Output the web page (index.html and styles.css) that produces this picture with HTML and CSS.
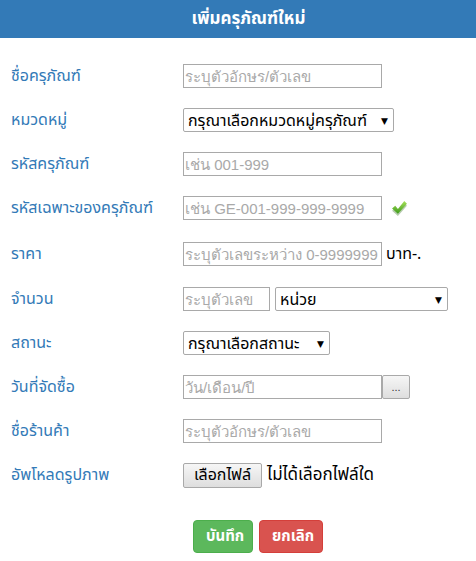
FILE: index.html
```html
<!DOCTYPE html>
<html lang="th">
  <head>
    <meta charset="UTF-8" />
    <meta name="viewport" content="width=device-width, initial-scale=1.0" />
    <title>เพิ่มครุภัณฑ์ใหม่</title>
    <link rel="stylesheet" href="styles.css">
  </head>
  <body>
    <div class="panel">
      <div class="panel-head">เพิ่มครุภัณฑ์ใหม่</div>
      <form class="asset-form">
        <div class="row">
          <label for="name">ชื่อครุภัณฑ์</label>
          <input type="text" id="name" class="field" placeholder="ระบุตัวอักษร/ตัวเลข" />
        </div>
        <div class="row">
          <label for="category">หมวดหมู่</label>
          <span class="select-box cat">
            <select id="category"><option>กรุณาเลือกหมวดหมู่ครุภัณฑ์</option></select>
          </span>
        </div>
        <div class="row">
          <label for="code">รหัสครุภัณฑ์</label>
          <input type="text" id="code" class="field" placeholder="เช่น 001-999" />
        </div>
        <div class="row row-tall">
          <label for="serial">รหัสเฉพาะของครุภัณฑ์</label>
          <input type="text" id="serial" class="field" placeholder="เช่น GE-001-999-999-9999" />
          <svg class="check" width="17" height="17" viewBox="0 0 16 16">
            <defs>
              <linearGradient id="g" x1="0" y1="0" x2="0" y2="1">
                <stop offset="0" stop-color="#a6e05a" />
                <stop offset="1" stop-color="#3d9a1a" />
              </linearGradient>
            </defs>
            <path d="M1 9 L4 6.5 L6.5 9.5 L12.5 2 L15 4.5 L6.5 14 Z" fill="#2f6b14" opacity="0.35" transform="translate(0,1)" />
            <path d="M1 8 L4 5.5 L6.5 8.5 L12.5 1 L15 3.5 L6.5 13 Z" fill="url(#g)" />
          </svg>
        </div>
        <div class="row row-mid">
          <label for="price">ราคา</label>
          <input type="text" id="price" class="field" placeholder="ระบุตัวเลขระหว่าง 0-9999999" />
          <span class="unit">บาท-.</span>
        </div>
        <div class="row">
          <label for="qty">จำนวน</label>
          <input type="text" id="qty" class="field qty" placeholder="ระบุตัวเลข" />
          <span class="select-box unit-sel">
            <select><option>หน่วย</option></select>
          </span>
        </div>
        <div class="row">
          <label for="status">สถานะ</label>
          <span class="select-box status">
            <select id="status"><option>กรุณาเลือกสถานะ</option></select>
          </span>
        </div>
        <div class="row">
          <label for="date">วันที่จัดซื้อ</label>
          <input type="text" id="date" class="field" placeholder="วัน/เดือน/ปี" />
          <button type="button" class="dots">...</button>
        </div>
        <div class="row">
          <label for="shop">ชื่อร้านค้า</label>
          <input type="text" id="shop" class="field" placeholder="ระบุตัวอักษร/ตัวเลข" />
        </div>
        <div class="row">
          <label for="photo">อัพโหลดรูปภาพ</label>
          <span class="file-btn">เลือกไฟล์</span>
          <span class="file-text">ไม่ได้เลือกไฟล์ใด</span>
        </div>
        <div class="actions">
          <button type="submit" class="btn btn-save">บันทึก</button>
          <button type="reset" class="btn btn-cancel">ยกเลิก</button>
        </div>
      </form>
    </div>
  </body>
</html>
```

FILE: styles.css
```css
body {
  margin: 0;
  background: #fff;
  font-family: Tahoma, "Noto Sans Thai", "Noto Sans", "DejaVu Sans", sans-serif;
}

.panel-head {
  background: #337ab7;
  color: #fff;
  height: 38px;
  line-height: 38px;
  text-align: center;
  font-size: 17px;
  font-weight: bold;
  padding-left: 21px;
}

.asset-form {
  padding: 26px 0 0 11px;
}

.row {
  display: flex;
  align-items: center;
  height: 24px;
  margin-bottom: 20px;
}

.row-tall {
  margin-bottom: 22px;
}

.row-mid {
  margin-bottom: 21px;
}

.row label {
  width: 172px;
  color: #337ab7;
  font-size: 16px;
}

.field {
  box-sizing: border-box;
  width: 199px;
  height: 24px;
  border: 1px solid #a9a9a9;
  padding: 0 1px;
  margin: 0;
  font-family: "Liberation Sans", Tahoma, sans-serif;
  font-size: 15px;
  color: #333;
}

.field::placeholder {
  color: #a9a9a9;
}

.field.qty {
  width: 87px;
}

.check {
  margin-left: 9px;
}

.unit {
  margin-left: 4px;
  font-size: 16px;
  color: #000;
}

.select-box {
  position: relative;
  display: inline-block;
  height: 24px;
}

.select-box select {
  appearance: none;
  box-sizing: border-box;
  width: 100%;
  height: 24px;
  border: 1px solid #a9a9a9;
  border-radius: 2px;
  background: #fff;
  padding: 0 18px 0 4px;
  font-family: inherit;
  font-size: 16px;
  color: #000;
}

.select-box::after {
  content: "\25BC";
  position: absolute;
  right: 6px;
  top: 6px;
  font-size: 9px;
  color: #000;
  pointer-events: none;
}

.select-box.cat {
  width: 211px;
}

.select-box.unit-sel {
  width: 173px;
  margin-left: 5px;
}

.select-box.status {
  width: 147px;
}

.dots {
  box-sizing: border-box;
  width: 28px;
  height: 24px;
  margin: 0;
  border: 1px solid #a9a9a9;
  border-radius: 2px;
  background: linear-gradient(#f6f6f6, #dedede);
  font-size: 11px;
  color: #333;
  padding: 0;
}

.file-btn {
  box-sizing: border-box;
  height: 25px;
  line-height: 23px;
  width: 79px;
  text-align: center;
  border: 1px solid #a9a9a9;
  border-radius: 2px;
  background: linear-gradient(#f6f6f6, #dedede);
  font-size: 16px;
  color: #000;
}

.file-text {
  margin-left: 5px;
  font-size: 17px;
  color: #000;
}

.actions {
  display: flex;
  justify-content: center;
  gap: 6px;
  padding-top: 13px;
  padding-left: 29px;
}

.btn {
  height: 33px;
  border: 1px solid transparent;
  border-radius: 4px;
  color: #fff;
  font-family: inherit;
  font-size: 15px;
  font-weight: bold;
  padding: 0 12px;
}

.btn-save {
  width: 60px;
  background: #5cb85c;
  border-color: #4cae4c;
}

.btn-cancel {
  width: 64px;
  background: #d9534f;
  border-color: #d43f3a;
}
```
